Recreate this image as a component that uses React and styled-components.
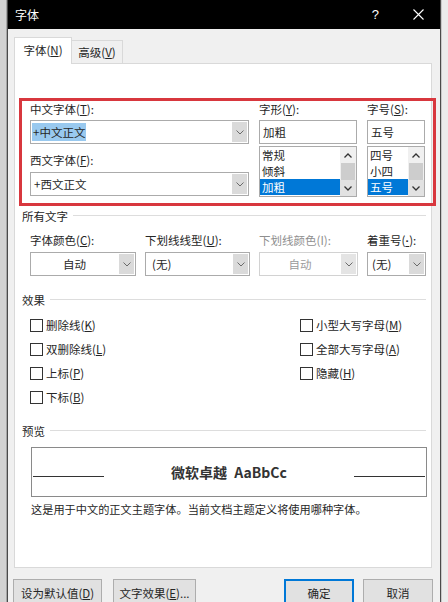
import styled, { createGlobalStyle } from 'styled-components'

const GlobalStyle = createGlobalStyle`
  body {
    margin: 0;
    background: #dcdcdc;
    font-family: "Noto Sans CJK SC", "Noto Sans", sans-serif;
    font-size: 11.5px;
    color: #262626;
  }
  * { box-sizing: border-box; }
  u { text-underline-offset: 1px; }
`;

const Screen = styled.div`
  width: 448px;
  height: 602px;
  overflow: hidden;
  display: flex;
`;

const SideStrip = styled.div`
  width: 7px;
  flex-shrink: 0;
  background: ${p => (p.$right ? '#ebebeb' : '#d2d2d2')};
  border-right: ${p => (p.$right ? 'none' : '1px solid #a5a5a5')};
  border-left: ${p => (p.$right ? '1px solid #c8c8c8' : 'none')};
`;

const Window = styled.div`
  width: 434px;
  flex-shrink: 0;
  display: flex;
  flex-direction: column;
  background: #f0f0f0;
  border-left: 1px solid #4a4a4a;
  border-right: 1px solid #4a4a4a;
`;

const TitleBar = styled.div`
  height: 29px;
  flex-shrink: 0;
  background: #000;
  color: #fff;
  display: flex;
  align-items: center;
  padding: 0 16px 0 7px;
`;

const Title = styled.div`
  flex: 1;
  font-size: 12px;
`;

const HelpMark = styled.div`
  font-size: 13px;
  margin-right: 34px;
  font-family: "Liberation Sans", sans-serif;
`;

const Body = styled.div`
  flex: 1;
  padding: 9px 8px 0 6px;
`;

const Tabs = styled.div`
  display: flex;
  align-items: flex-end;
  height: 25px;
`;

const Tab = styled.div`
  display: flex;
  align-items: center;
  justify-content: center;
  width: ${p => (p.$active ? '58px' : '51px')};
  height: ${p => (p.$active ? '27px' : '23px')};
  margin-bottom: ${p => (p.$active ? '-1px' : '0')};
  padding-bottom: ${p => (p.$active ? '2px' : '0')};
  background: ${p => (p.$active ? '#fff' : '#f0f0f0')};
  border: 1px solid #d9d9d9;
  border-bottom: none;
  border-left: ${p => (p.$active ? '1px solid #d9d9d9' : 'none')};
  position: relative;
  z-index: ${p => (p.$active ? 1 : 0)};
`;

const Panel = styled.div`
  width: 418px;
  height: 505px;
  background: #fff;
  border: 1px solid #d9d9d9;
`;

const Highlight = styled.div`
  margin: 34px 0 0 4px;
  width: 417px;
  border: 3px solid #d8373e;
  padding: 0 8px 6px 8px;
  display: flex;
  gap: 10px;
`;

const Column = styled.div`
  width: ${p => p.$w}px;
  display: flex;
  flex-direction: column;
`;

const Label = styled.div`
  height: 17px;
  line-height: 17px;
  white-space: nowrap;
  margin-top: ${p => p.$top || 0}px;
  color: ${p => (p.$disabled ? '#8f8f8f' : '#262626')};
`;

const Dot = styled.u`
  font-family: "Liberation Sans", sans-serif;
  font-weight: 700;
`;

const Combo = styled.div`
  height: 24px;
  margin-top: ${p => p.$top || 0}px;
  display: flex;
  border: 1px solid ${p => (p.$disabled ? '#d2d2d2' : '#ababab')};
  background: #fff;
`;

const ComboText = styled.div`
  flex: 1;
  display: flex;
  align-items: center;
  justify-content: ${p => (p.$center ? 'center' : 'flex-start')};
  padding-left: ${p => (p.$center ? 0 : p.$pad || 3)}px;
  color: ${p => (p.$disabled ? '#9a9a9a' : '#262626')};
  white-space: nowrap;
`;

const Selected = styled.span`
  background: #99c9ef;
  padding: 1px 1px;
`;

const ArrowButton = styled.div`
  width: 15px;
  margin: 1px;
  background: ${p => (p.$disabled ? '#e4e4e4' : '#dadada')};
  display: flex;
  align-items: center;
  justify-content: center;
`;

const ListBox = styled.div`
  height: 51px;
  margin-top: 2px;
  display: flex;
  border: 1px solid #ababab;
  background: #fff;
`;

const ListItems = styled.div`
  flex: 1;
  display: flex;
  flex-direction: column;
`;

const ListItem = styled.div`
  height: 16px;
  line-height: 16px;
  padding-left: 2px;
  background: ${p => (p.$selected ? '#0078d7' : 'transparent')};
  color: ${p => (p.$selected ? '#fff' : '#262626')};
`;

const ScrollBar = styled.div`
  width: 16px;
  display: flex;
  flex-direction: column;
  background: #f0f0f0;
`;

const ScrollButton = styled.div`
  height: 16px;
  display: flex;
  align-items: center;
  justify-content: center;
  background: ${p => (p.$shade ? '#e2e2e2' : 'transparent')};
`;

const Thumb = styled.div`
  height: 17px;
  margin: 0 1px;
  background: #cdcdcd;
`;

const GroupHeader = styled.div`
  display: flex;
  align-items: center;
  gap: 5px;
  height: 17px;
  margin-top: ${p => p.$top}px;
  padding: 0 5px 0 7px;
  &::after {
    content: '';
    flex: 1;
    height: 1px;
    background: #dddddd;
  }
`;

const DropGrid = styled.div`
  display: grid;
  grid-template-columns: 106px 105px 99px 59px;
  column-gap: 9px;
  row-gap: 3px;
  margin-top: 8px;
  padding-left: 15px;
`;

const Effects = styled.div`
  display: flex;
  margin-top: 5px;
  padding-left: 15px;
`;

const EffectColumn = styled.div`
  width: ${p => p.$w || 'auto'};
  display: flex;
  flex-direction: column;
`;

const CheckRow = styled.label`
  height: 24px;
  display: flex;
  align-items: center;
  gap: 3px;
  white-space: nowrap;
`;

const Box = styled.span`
  width: 13px;
  height: 13px;
  border: 1px solid #333;
  background: #fff;
`;

const Preview = styled.div`
  margin: 8px 0 0 16px;
  width: 396px;
  height: 50px;
  border: 1px solid #8a8a8a;
  display: flex;
  align-items: center;
  justify-content: space-between;
  padding: 0 1px;
`;

const PreviewLine = styled.div`
  width: 71px;
  height: 1px;
  background: #333;
  margin-top: 8px;
`;

const PreviewText = styled.div`
  font-size: 14px;
  font-weight: 700;
  color: #333;
  word-spacing: 4px;
`;

const Description = styled.div`
  margin: 4px 0 0 16px;
  height: 17px;
  line-height: 17px;
  font-size: 11.2px;
  white-space: nowrap;
`;

const ButtonRow = styled.div`
  display: flex;
  margin: 11px -1px 0 -1px;
`;

const ButtonGroup = styled.div`
  display: flex;
  gap: ${p => p.$gap}px;
`;

const Spacer = styled.div`
  flex: 1;
`;

const Button = styled.div`
  width: ${p => p.$w}px;
  height: 27px;
  display: flex;
  align-items: center;
  justify-content: center;
  background: #e1e1e1;
  border: ${p => (p.$primary ? '2px solid #0078d7' : '1px solid #adadad')};
  white-space: nowrap;
`;

const Chevron = ({ up, dark }) => (
  <svg width="8" height="5" viewBox="0 0 8 5">
    <polyline
      points={up ? '0.5,4.5 4,1 7.5,4.5' : '0.5,0.5 4,4 7.5,0.5'}
      fill="none"
      stroke={dark ? '#333' : '#6a6a6a'}
      strokeWidth={dark ? 1.3 : 1}
    />
  </svg>
);

const CloseIcon = () => (
  <svg width="11" height="11" viewBox="0 0 11 11">
    <path d="M0.5 0.5 L10.5 10.5 M10.5 0.5 L0.5 10.5" stroke="#fff" strokeWidth="1.1" />
  </svg>
);

const Dropdown = ({ text, center, disabled, pad, top, children }) => (
  <Combo $disabled={disabled} $top={top}>
    <ComboText $center={center} $disabled={disabled} $pad={pad}>{children || text}</ComboText>
    <ArrowButton $disabled={disabled}><Chevron /></ArrowButton>
  </Combo>
);

const List = ({ items, selected }) => (
  <ListBox>
    <ListItems>
      {items.map(item => (
        <ListItem key={item} $selected={item === selected}>{item}</ListItem>
      ))}
    </ListItems>
    <ScrollBar>
      <ScrollButton><Chevron up dark /></ScrollButton>
      <Thumb />
      <ScrollButton $shade><Chevron dark /></ScrollButton>
    </ScrollBar>
  </ListBox>
);

const Check = ({ children }) => (
  <CheckRow>
    <Box />
    <span>{children}</span>
  </CheckRow>
);

export default function App() {
  return (
    <Screen>
      <GlobalStyle />
      <SideStrip />
      <Window>
        <TitleBar>
          <Title>字体</Title>
          <HelpMark>?</HelpMark>
          <CloseIcon />
        </TitleBar>
        <Body>
          <Tabs>
            <Tab $active>字体(<u>N</u>)</Tab>
            <Tab>高级(<u>V</u>)</Tab>
          </Tabs>
          <Panel>
            <Highlight>
              <Column $w={219}>
                <Label>中文字体(<u>T</u>):</Label>
                <Dropdown top={2} pad={1}>
                  <Selected>+中文正文</Selected>
                </Dropdown>
                <Label $top={8}>西文字体(<u>F</u>):</Label>
                <Dropdown top={3} text="+西文正文" pad={3} />
              </Column>
              <Column $w={98}>
                <Label>字形(<u>Y</u>):</Label>
                <Combo $top={2}><ComboText $pad={3}>加粗</ComboText></Combo>
                <List items={['常规', '倾斜', '加粗']} selected="加粗" />
              </Column>
              <Column $w={58}>
                <Label>字号(<u>S</u>):</Label>
                <Combo $top={2}><ComboText $pad={3}>五号</ComboText></Combo>
                <List items={['四号', '小四', '五号']} selected="五号" />
              </Column>
            </Highlight>

            <GroupHeader $top={1}>所有文字</GroupHeader>
            <DropGrid>
              <Label>字体颜色(<u>C</u>):</Label>
              <Label>下划线线型(<u>U</u>):</Label>
              <Label $disabled>下划线颜色(I):</Label>
              <Label>着重号(<Dot>·</Dot>):</Label>
              <Dropdown text="自动" center />
              <Dropdown text="(无)" pad={6} />
              <Dropdown text="自动" center disabled />
              <Dropdown text="(无)" pad={4} />
            </DropGrid>

            <GroupHeader $top={15}>效果</GroupHeader>
            <Effects>
              <EffectColumn $w="270px">
                <Check>删除线(<u>K</u>)</Check>
                <Check>双删除线(<u>L</u>)</Check>
                <Check>上标(<u>P</u>)</Check>
                <Check>下标(<u>B</u>)</Check>
              </EffectColumn>
              <EffectColumn>
                <Check>小型大写字母(<u>M</u>)</Check>
                <Check>全部大写字母(<u>A</u>)</Check>
                <Check>隐藏(<u>H</u>)</Check>
              </EffectColumn>
            </Effects>

            <GroupHeader $top={13}>预览</GroupHeader>
            <Preview>
              <PreviewLine />
              <PreviewText>微软卓越 AaBbCc</PreviewText>
              <PreviewLine />
            </Preview>
            <Description>这是用于中文的正文主题字体。当前文档主题定义将使用哪种字体。</Description>
          </Panel>

          <ButtonRow>
            <ButtonGroup $gap={11}>
              <Button $w={89}>设为默认值(<u>D</u>)</Button>
              <Button $w={83}>文字效果(<u>E</u>)...</Button>
            </ButtonGroup>
            <Spacer />
            <ButtonGroup $gap={9}>
              <Button $w={70} $primary>确定</Button>
              <Button $w={70}>取消</Button>
            </ButtonGroup>
          </ButtonRow>
        </Body>
      </Window>
      <SideStrip $right />
    </Screen>
  );
}
